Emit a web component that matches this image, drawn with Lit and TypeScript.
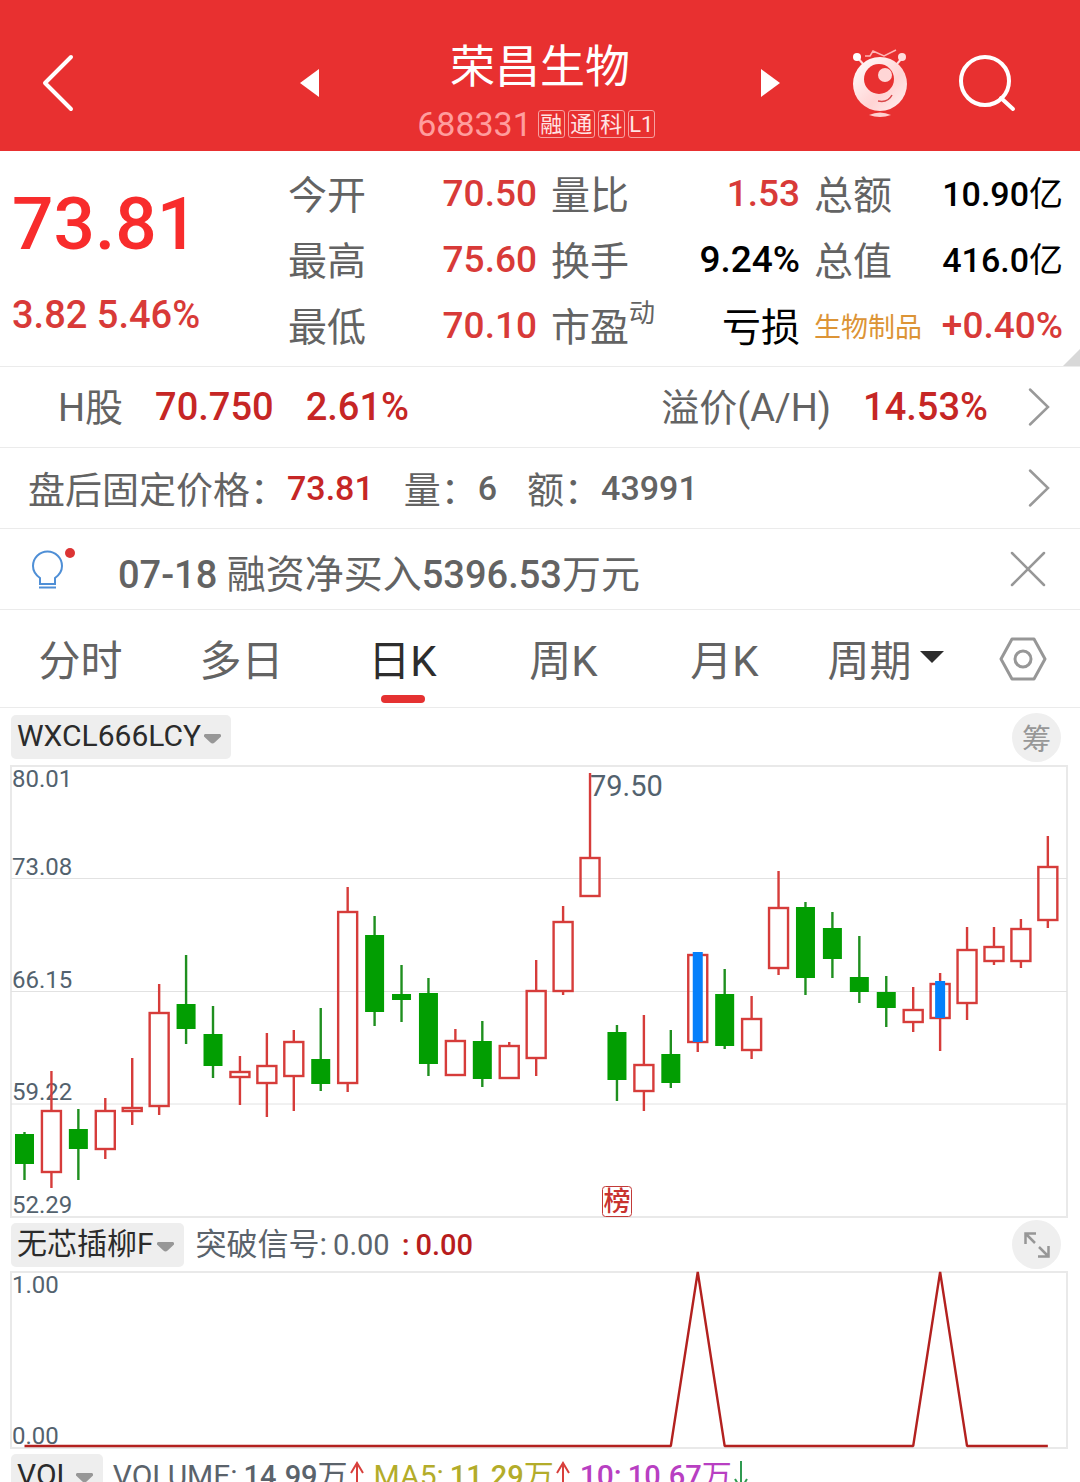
import { LitElement, html, svg, css, nothing } from "lit";
import { customElement, property, state } from "lit/decorators.js";
import { classMap } from "lit/directives/class-map.js";

type Tone = "up" | "ink" | "plain";

interface Stat {
  label: string;
  note?: string;
  value: string;
  tone: Tone;
  small?: boolean;
  sector?: boolean;
}

/** Candle in plot units: high, body top, body bottom, low. */
interface Candle {
  rise: boolean;
  y: [number, number, number, number];
  signal?: [number, number];
}

const up = (...y: [number, number, number, number]): Candle => ({ rise: true, y });
const down = (...y: [number, number, number, number]): Candle => ({ rise: false, y });

const CANDLES: Candle[] = [
  down(366, 368, 398, 414),
  up(305, 344, 407, 422),
  down(343, 363, 383, 414),
  up(332, 344, 384, 393),
  up(292, 341, 346, 359),
  up(218, 246, 341, 349),
  down(189, 238, 263, 278),
  down(240, 268, 300, 312),
  up(290, 305, 312, 339),
  up(267, 299, 318, 351),
  up(264, 275, 311, 345),
  down(242, 293, 318, 325),
  up(121, 145, 318, 326),
  down(150, 169, 246, 260),
  down(199, 228, 234, 256),
  down(212, 227, 298, 310),
  up(263, 274, 310, 310),
  down(255, 275, 313, 321),
  up(276, 279, 313, 313),
  up(194, 224, 293, 310),
  up(140, 155, 226, 229),
  up(7, 91, 131, 131),
  down(259, 266, 314, 335),
  up(249, 298, 326, 345),
  down(264, 288, 317, 322),
  { rise: true, y: [188, 188, 277, 286], signal: [186, 276] },
  down(203, 228, 280, 283),
  up(230, 252, 285, 293),
  up(105, 141, 203, 209),
  down(136, 141, 212, 229),
  down(146, 162, 193, 212),
  down(170, 211, 226, 237),
  down(210, 226, 242, 261),
  up(221, 243, 257, 266),
  { rise: true, y: [207, 217, 253, 285], signal: [215, 252] },
  up(161, 183, 238, 254),
  up(161, 180, 196, 199),
  up(153, 162, 196, 202),
  up(70, 100, 155, 162),
];

const STEP = 26.93;
const candleX = (i: number) => 13.5 + i * STEP;

const STATS: Stat[] = [
  { label: "今开", value: "70.50", tone: "up" },
  { label: "量比", value: "1.53", tone: "up" },
  { label: "总额", value: "10.90亿", tone: "ink", small: true },
  { label: "最高", value: "75.60", tone: "up" },
  { label: "换手", value: "9.24%", tone: "ink" },
  { label: "总值", value: "416.0亿", tone: "ink", small: true },
  { label: "最低", value: "70.10", tone: "up" },
  { label: "市盈", note: "动", value: "亏损", tone: "plain" },
  { label: "生物制品", value: "+0.40%", tone: "up", sector: true },
];

const TABS = ["分时", "多日", "日K", "周K", "月K", "周期"];

@customElement("kline-chart")
export class KlineChart extends LitElement {
  static styles = css`
    :host {
      display: block;
    }
    svg {
      display: block;
      width: 100%;
      height: auto;
      overflow: visible;
      font-family: Roboto, "Noto Sans CJK SC", sans-serif;
    }
    .frame {
      fill: none;
      stroke: #e9e9e9;
      stroke-width: 2;
    }
    .grid {
      stroke: #e2e2e2;
      stroke-width: 1;
    }
    .axis {
      font-size: 24px;
      fill: #53626e;
      stroke: none;
    }
    .peak {
      font-size: 29px;
      fill: #53626e;
    }
    .rise {
      fill: none;
      stroke: #d63c3a;
      stroke-width: 2.4;
    }
    .fall {
      fill: #029e02;
      stroke: none;
    }
    .fall-wick {
      stroke: #1f8f1f;
      stroke-width: 2.4;
    }
    .signal {
      fill: #0480fb;
    }
    .stamp {
      fill: #fff;
      stroke: #c23a38;
      stroke-width: 1;
    }
    .stamp-text {
      font-size: 27px;
      font-weight: 500;
      fill: #c8332f;
      text-anchor: middle;
    }
  `;

  private candle(c: Candle, i: number) {
    const x = candleX(i);
    const [high, top, bottom, low] = c.y;
    const wick = c.rise ? "rise" : "fall-wick";
    return svg`
      <line class=${wick} x1=${x} x2=${x} y1=${high} y2=${top}></line>
      <line class=${wick} x1=${x} x2=${x} y1=${bottom} y2=${low}></line>
      ${
        c.rise
          ? svg`<rect class="rise" x=${x - 9.5} y=${top + 1} width="19" height=${bottom - top - 2}></rect>`
          : svg`<rect class="fall" x=${x - 9.5} y=${top} width="19" height=${bottom - top}></rect>`
      }
      ${
        c.signal
          ? svg`<rect class="signal" x=${x - 5} y=${c.signal[0]} width="10" height=${c.signal[1] - c.signal[0]}></rect>`
          : nothing
      }`;
  }

  render() {
    const labels: [string, number][] = [
      ["80.01", 21],
      ["73.08", 109],
      ["66.15", 222],
      ["59.22", 334],
      ["52.29", 447],
    ];
    return html`
      <svg viewBox="0 0 1056 451" role="img" aria-label="日K">
        <rect class="frame" x="0" y="0" width="1056" height="451"></rect>
        ${[112.5, 225.5, 338].map((y) => svg`<line class="grid" x1="0" x2="1056" y1=${y} y2=${y}></line>`)}
        ${labels.map(([t, y]) => svg`<text class="axis" x="1" y=${y}>${t}</text>`)}
        ${CANDLES.map((c, i) => this.candle(c, i))}
        <text class="peak" x="579" y="30">79.50</text>
        <rect class="stamp" x="591.5" y="420.5" width="29" height="30" rx="3"></rect>
        <text class="stamp-text" x="606" y="445">榜</text>
      </svg>
    `;
  }
}

@customElement("signal-chart")
export class SignalChart extends LitElement {
  static styles = css`
    :host {
      display: block;
    }
    svg {
      display: block;
      width: 100%;
      height: auto;
      overflow: visible;
      font-family: Roboto, "Noto Sans CJK SC", sans-serif;
    }
    .frame {
      fill: none;
      stroke: #e9e9e9;
      stroke-width: 2;
    }
    .axis {
      font-size: 24px;
      fill: #53626e;
    }
    .line {
      fill: none;
      stroke: #b3211f;
      stroke-width: 2.4;
      stroke-linejoin: bevel;
    }
  `;

  render() {
    const points = CANDLES.map((c, i) => `${candleX(i)},${c.signal ? 0 : 174}`).join(" ");
    return html`
      <svg viewBox="0 0 1056 176" role="img" aria-label="突破信号">
        <rect class="frame" x="0" y="0" width="1056" height="176"></rect>
        <text class="axis" x="1" y="21">1.00</text>
        <text class="axis" x="1" y="172">0.00</text>
        <polyline class="line" points=${points}></polyline>
      </svg>
    `;
  }
}

@customElement("indicator-bar")
export class IndicatorBar extends LitElement {
  @property() name = "";

  static styles = css`
    :host {
      display: flex;
      align-items: center;
      gap: 12px;
      height: 55px;
      padding: 0 19px 0 11px;
      font-family: Roboto, "Noto Sans CJK SC", sans-serif;
      font-size: 30px;
      color: #5b636b;
    }
    .pick {
      display: flex;
      align-items: center;
      gap: 3px;
      height: 44px;
      padding: 0 10px 2px 6px;
      border: 0;
      border-radius: 5px;
      background: #eee;
      color: #2b2b2b;
      font: inherit;
      line-height: 42px;
    }
    .caret {
      width: 17px;
      height: 10px;
      margin-top: 6px;
      fill: #979797;
    }
    .end {
      margin-left: auto;
    }
  `;

  render() {
    return html`
      <button class="pick" type="button">
        ${this.name}
        <svg class="caret" viewBox="0 0 16 10" preserveAspectRatio="none" aria-hidden="true">
          <path d="M1 0H15Q17 1 15.500 3L10 8.500Q8 10.500 6 8.500L.5 3Q-1 1 1 0Z"></path>
        </svg>
      </button>
      <slot></slot>
      <div class="end"><slot name="end"></slot></div>
    `;
  }
}

@customElement("app-root")
export class AppRoot extends LitElement {
  @state() private tab = 2;
  @state() private noticeOpen = true;

  static styles = css`
    :host {
      display: block;
      height: 100vh;
      overflow: hidden;
      background: #fff;
      color: #636363;
      font-family: Roboto, "Noto Sans CJK SC", sans-serif;
    }
    button {
      margin: 0;
      padding: 0;
      border: 0;
      background: none;
      color: inherit;
      font: inherit;
    }
    svg {
      display: block;
      flex: none;
    }
    a {
      color: inherit;
      text-decoration: none;
    }

    .header {
      display: grid;
      grid-template-columns: 300fr 480fr 300fr;
      align-items: center;
      padding: 28px 0 13px;
      background: #e83030;
      color: #fff;
    }
    .back {
      justify-self: start;
      margin-left: 42px;
    }
    .switcher {
      display: flex;
      align-items: center;
      justify-content: space-between;
    }
    .title {
      margin: 0;
      font-size: 45px;
      font-weight: 400;
      line-height: 80px;
      text-align: center;
    }
    .code-row {
      display: flex;
      align-items: center;
      justify-content: center;
      height: 28px;
      margin-top: 2px;
      padding-right: 8px;
      gap: 3px;
    }
    .code {
      margin-right: 3px;
      color: #ff9d9d;
      font-size: 34px;
      line-height: 28px;
    }
    .badge {
      width: 25px;
      height: 26px;
      border: 1px solid #f6a0a0;
      border-radius: 3px;
      color: #ffe3e3;
      font-size: 22px;
      line-height: 27px;
      text-align: center;
    }
    .actions {
      display: flex;
      align-items: center;
      justify-content: flex-end;
      gap: 50px;
      padding-right: 64px;
    }

    .quote {
      position: relative;
      display: grid;
      grid-template-columns: 288fr 792fr;
      border-bottom: 1px solid #ebebeb;
      padding: 10px 0 7px;
    }
    .price-block {
      padding-left: 12px;
      white-space: nowrap;
    }
    .price {
      color: #f82c2c;
      font-size: 73px;
      font-weight: 500;
      line-height: 126px;
    }
    .change {
      color: #d83a38;
      font-size: 38px;
      font-weight: 500;
      line-height: 56px;
    }
    .stats {
      display: grid;
      grid-template-columns: repeat(3, 1fr);
      column-gap: 14px;
      margin: 0;
      padding-right: 17px;
    }
    .stat {
      display: flex;
      align-items: center;
      justify-content: space-between;
      height: 66px;
      line-height: 66px;
      white-space: nowrap;
    }
    .label {
      display: flex;
      padding-top: 4px;
      font-size: 39px;
    }
    .note {
      font-size: 26px;
      line-height: 36px;
    }
    .sector {
      color: #dc9436;
      font-size: 27px;
    }
    .value {
      margin: 0;
      font-size: 37px;
      font-weight: 500;
    }
    .small {
      font-size: 34px;
    }
    .up {
      color: #d83a38;
    }
    .ink {
      color: #000;
    }
    .plain {
      padding-top: 4px;
      color: #000;
      font-size: 39px;
      font-weight: 400;
    }
    .yi {
      font-weight: 400;
    }
    .corner {
      position: absolute;
      right: 0;
      bottom: 0;
      width: 17px;
      height: 17px;
      background: #d8d8d8;
      clip-path: polygon(100% 0, 100% 100%, 0 100%);
    }

    .row {
      display: flex;
      align-items: center;
      gap: 32px;
      height: 80px;
      padding: 0 30px 0 28px;
      border-bottom: 1px solid #ebebeb;
      white-space: nowrap;
    }
    .ah {
      padding-left: 58px;
      font-size: 38px;
    }
    .caption {
      padding-bottom: 6px;
    }
    .fixed {
      gap: 30px;
      font-size: 37px;
    }
    .pair {
      display: flex;
      align-items: center;
    }
    .num {
      font-size: 34px;
      font-weight: 500;
    }
    .red {
      color: #c62625;
      font-weight: 500;
    }
    .push {
      margin-left: auto;
    }
    .chevron {
      margin-left: 8px;
    }
    .fixed .chevron {
      margin-left: auto;
    }
    .news {
      flex: 1;
      padding: 4px 0 0 10px;
      font-size: 39px;
    }
    .digits {
      font-size: 38px;
      font-weight: 500;
    }

    .tabs {
      display: grid;
      grid-template-columns: repeat(6, 161fr) 114fr;
      height: 97px;
      border-bottom: 1px solid #ebebeb;
    }
    .tab {
      display: grid;
      grid-template-rows: 1fr 8px;
      justify-items: center;
      padding: 9px 0 4px;
      font-size: 42px;
    }
    .tab-text {
      display: flex;
      align-items: center;
      gap: 8px;
      color: #636363;
    }
    .selected .tab-text {
      color: #2d2d2d;
    }
    .marker {
      width: 44px;
      border-radius: 4px;
    }
    .selected .marker {
      background: #e53131;
    }
    .settings {
      display: grid;
      place-items: center;
    }

    .plot {
      padding: 0 13px 0 11px;
    }
    .top-bar {
      height: 58px;
    }
    .round {
      display: grid;
      place-items: center;
      width: 49px;
      height: 49px;
      border-radius: 50%;
      background: #efefef;
      color: #979797;
      font-size: 29px;
    }
    .reading {
      display: flex;
      align-items: center;
      height: 42px;
      line-height: 42px;
      white-space: nowrap;
    }
    .reading b {
      font-weight: 500;
    }
    .reading .amount {
      margin-left: 6px;
      font-size: 29px;
    }
    .arrow {
      margin-left: 2px;
    }
    .cn {
      font-size: 31px;
    }
    .zero {
      color: #b81d1d;
    }
    .volume {
      gap: 10px;
    }
    .ma5 {
      color: #b3ac2a;
    }
    .ma10 {
      color: #b83fc2;
    }
  `;

  private chevron() {
    return html`<svg class="chevron" width="22" height="40" viewBox="0 0 22 40" fill="none" stroke="#999" stroke-width="2.500" stroke-linecap="round" aria-hidden="true">
      <path d="M2 2.500L20 20L2 37.500"></path>
    </svg>`;
  }

  private header() {
    return html`
      <header class="header">
        <button class="back" type="button" aria-label="返回">
          <svg width="32" height="58" viewBox="0 0 32 58" fill="none" stroke="#fff" stroke-width="4" stroke-linecap="round" stroke-linejoin="round">
            <path d="M29 3L3 29L29 55"></path>
          </svg>
        </button>
        <div class="switcher">
          <button type="button" aria-label="上一只">
            <svg width="19" height="28" viewBox="0 0 19 28" fill="#fff"><path d="M19 0V28L0 14Z"></path></svg>
          </button>
          <div>
            <h1 class="title">荣昌生物</h1>
            <div class="code-row">
              <span class="code">688331</span>
              ${["融", "通", "科", "L1"].map((t) => html`<span class="badge">${t}</span>`)}
            </div>
          </div>
          <button type="button" aria-label="下一只">
            <svg width="19" height="28" viewBox="0 0 19 28" fill="#fff"><path d="M0 0V28L19 14Z"></path></svg>
          </button>
        </div>
        <div class="actions">
          <button type="button" aria-label="助手">
            <svg width="56" height="68" viewBox="0 0 56 68">
              <defs>
                <linearGradient id="ball" x1="0" y1="0" x2="1" y2="1">
                  <stop offset="0" stop-color="#fff"></stop>
                  <stop offset=".6" stop-color="#ffd4d4"></stop>
                  <stop offset="1" stop-color="#fff0f0"></stop>
                </linearGradient>
              </defs>
              <path d="M13 7H18L21 2L32 7L44 1" fill="none" stroke="#ffb5b5" stroke-width="1.500"></path>
              <path d="M5 8L12 16M51 8L44 16" stroke="#ffdede" stroke-width="2"></path>
              <circle cx="5" cy="8" r="4" fill="#fff"></circle>
              <circle cx="50" cy="8" r="4" fill="#ffdede"></circle>
              <circle cx="28" cy="35" r="27" fill="url(#ball)"></circle>
              <circle cx="27" cy="30" r="15" fill="#e83030"></circle>
              <circle cx="33" cy="26" r="7" fill="#ffd6d6"></circle>
              <path d="M26 52Q36 54 40 46" fill="none" stroke="#d8484a" stroke-width="1.500"></path>
              <path d="M17 66Q28 61 39 66Q28 70 17 66Z" fill="#ffd0d0"></path>
            </svg>
          </button>
          <button type="button" aria-label="搜索">
            <svg width="58" height="58" viewBox="0 0 58 58" fill="none" stroke="#fff" stroke-width="4" stroke-linecap="round">
              <circle cx="27" cy="27" r="24"></circle>
              <path d="M43 44L55 55"></path>
            </svg>
          </button>
        </div>
      </header>
    `;
  }

  private stat(s: Stat) {
    const cls = { value: true, small: !!s.small, [s.tone]: true };
    const value = s.value.endsWith("亿")
      ? html`${s.value.slice(0, -1)}<span class="yi">亿</span>`
      : s.value;
    return html`
      <div class="stat">
        <dt class=${classMap({ label: true, sector: !!s.sector })}>
          ${s.label}${s.note ? html`<span class="note">${s.note}</span>` : nothing}
        </dt>
        <dd class=${classMap(cls)}>${value}</dd>
      </div>
    `;
  }

  private quote() {
    return html`
      <section class="quote">
        <div class="price-block">
          <div class="price">73.81</div>
          <div class="change">3.82 5.46%</div>
        </div>
        <dl class="stats">${STATS.map((s) => this.stat(s))}</dl>
        <span class="corner"></span>
      </section>
    `;
  }

  private rows() {
    return html`
      <a class="row ah" href="#ah">
        <span class="caption">H股</span>
        <span class="red">70.750</span>
        <span class="red">2.61%</span>
        <span class="caption push">溢价(A/H)</span>
        <span class="red">14.53%</span>
        ${this.chevron()}
      </a>
      <a class="row fixed" href="#fixed">
        <span class="pair">盘后固定价格：<span class="num red">73.81</span></span>
        <span class="pair">量：<span class="num">6</span></span>
        <span class="pair">额：<span class="num">43991</span></span>
        ${this.chevron()}
      </a>
      ${this.noticeOpen
        ? html`<div class="row">
            <svg width="48" height="42" viewBox="0 0 48 42" fill="none" aria-hidden="true">
              <path d="M12 36V30Q5 25 5 18A14.500 14.500 0 0 1 34 18Q34 25 27 30V36Z" stroke="#4f8fd6" stroke-width="2"></path>
              <path d="M11 39.500H28" stroke="#4f8fd6" stroke-width="2"></path>
              <circle cx="42" cy="5" r="5" fill="#dc3434"></circle>
            </svg>
            <span class="news"
              ><span class="digits">07-18 </span>融资净买入<span class="digits">5396.53</span>万元</span
            >
            <button type="button" aria-label="关闭" @click=${() => (this.noticeOpen = false)}>
              <svg width="44" height="36" viewBox="0 0 44 36" stroke="#979797" stroke-width="2.500" stroke-linecap="round">
                <path d="M6 2L38 34M38 2L6 34"></path>
              </svg>
            </button>
          </div>`
        : nothing}
    `;
  }

  private tabs() {
    return html`
      <nav class="tabs">
        ${TABS.map(
          (t, i) => html`
            <button
              type="button"
              class=${classMap({ tab: true, selected: i === this.tab })}
              @click=${() => (this.tab = i)}
            >
              <span class="tab-text"
                >${t}${i === 5
                  ? html`<svg width="24" height="12" viewBox="0 0 24 12" fill="#2d2d2d"><path d="M0 0H24L12 12Z"></path></svg>`
                  : nothing}</span
              >
              <span class="marker"></span>
            </button>
          `
        )}
        <button class="settings" type="button" aria-label="设置">
          <svg width="48" height="44" viewBox="0 0 48 44" fill="none" stroke="#979797" stroke-width="3" stroke-linejoin="round">
            <path d="M13 2H35L46 22L35 42H13L2 22Z"></path>
            <circle cx="24" cy="22" r="8"></circle>
          </svg>
        </button>
      </nav>
    `;
  }

  private arrow(rise: boolean) {
    return html`<svg class="arrow" width="14" height="30" viewBox="0 0 14 30" fill="none" stroke=${rise ? "#d8403c" : "#2f9a50"} stroke-width="2" aria-hidden="true">
      <path d=${rise ? "M7 30V2M1 12L7 2L13 12" : "M7 0V27M1 18L7 28L13 18"}></path>
    </svg>`;
  }

  render() {
    return html`
      ${this.header()} ${this.quote()} ${this.rows()} ${this.tabs()}
      <indicator-bar class="top-bar" name="WXCL666LCY">
        <button slot="end" class="round" type="button">筹</button>
      </indicator-bar>
      <kline-chart class="plot"></kline-chart>
      <indicator-bar name="无芯插柳F">
        <span class="reading"><span class="cn">突破信号:</span><span class="amount">0.00</span></span>
        <span class="reading zero"><b>:</b><b class="amount">0.00</b></span>
        <button slot="end" class="round" type="button" aria-label="展开">
          <svg width="26" height="26" viewBox="0 0 26 26" fill="none" stroke="#979797" stroke-width="2.500">
            <path d="M1.500 12V1.500H12M2 2L11 11M24.500 14V24.500H14M24 24L15 15"></path>
          </svg>
        </button>
      </indicator-bar>
      <signal-chart class="plot"></signal-chart>
      <indicator-bar class="volume" name="VOL">
        <span class="reading"><span>VOLUME:</span><b class="amount">14.99</b><span>万</span>${this.arrow(true)}</span>
        <span class="reading ma5"><span>MA5:</span><b class="amount">11.29</b><span>万</span>${this.arrow(true)}</span>
        <span class="reading ma10"><b>10:</b><b class="amount">10.67</b><span>万</span>${this.arrow(false)}</span>
      </indicator-bar>
    `;
  }
}
